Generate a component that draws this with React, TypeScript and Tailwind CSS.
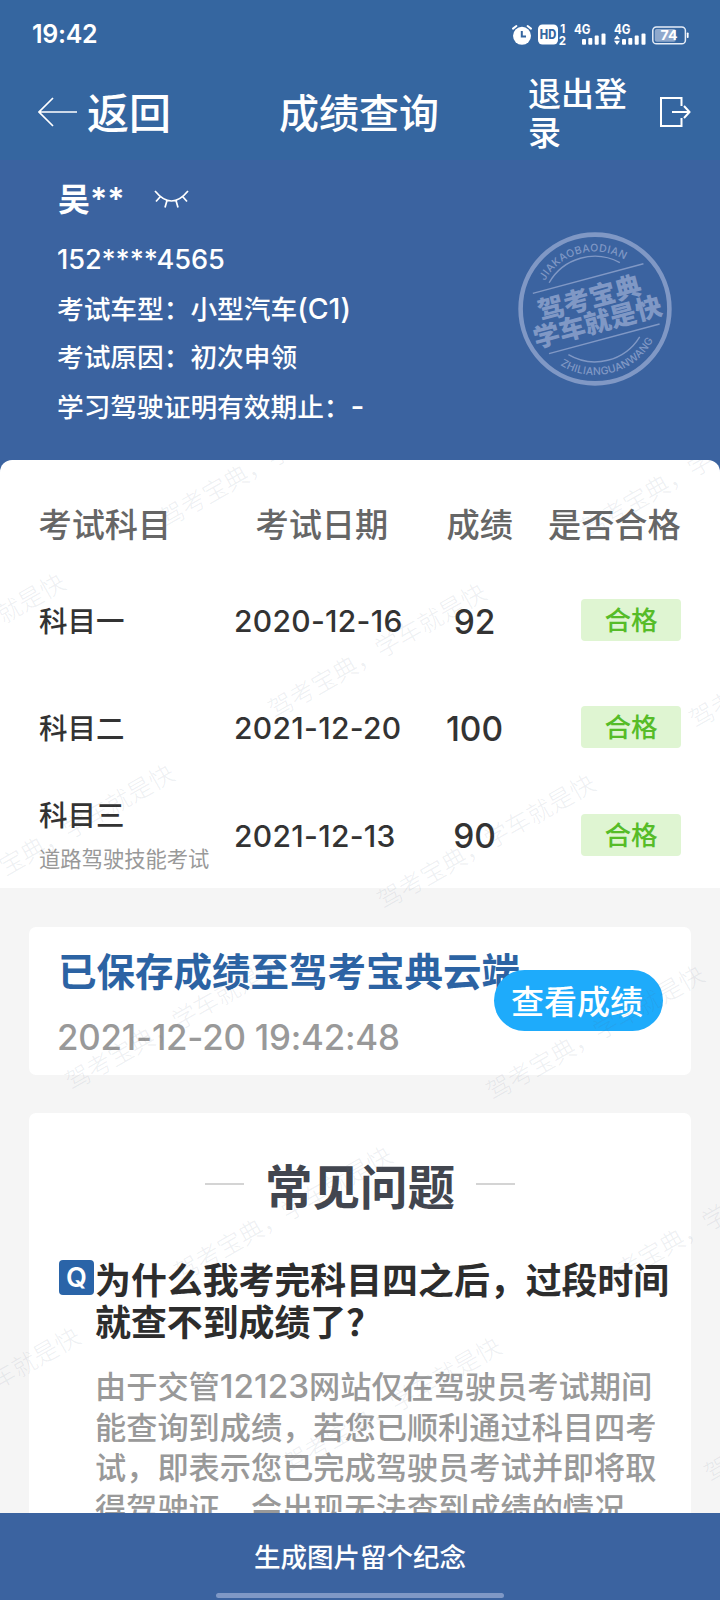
interface ExamRow {
  subject: string
  note?: string
  date: string
  score: number
  status: string
}

const exams: ExamRow[] = [
  { subject: '科目一', date: '2020-12-16', score: 92, status: '合格' },
  { subject: '科目二', date: '2021-12-20', score: 100, status: '合格' },
  { subject: '科目三', note: '道路驾驶技能考试', date: '2021-12-13', score: 90, status: '合格' },
]

const answerLines = [
  '能查询到成绩，若您已顺利通过科目四考',
  '试，即表示您已完成驾驶员考试并即将取',
  '得驾驶证，会出现无法查到成绩的情况，',
]

// Centre of the last glyph of every watermark, on a skewed grid
const watermarks = [-3, -2, -1, 0, 1, 2, 3, 4, 5]
  .flatMap((row) =>
    [-2, -1, 0, 1, 2].map((col) => ({
      x: 52 + row * 109 + col * 421,
      y: 126 + row * 191 + col * 10,
    }))
  )
  .filter(({ x, y }) => x > 0 && x < 910 && y > -110 && y < 1050)

function StatusIcons() {
  return (
    <svg width="178" height="24" viewBox="0 0 178 24" fill="#fff" className="overflow-visible">
      {/* alarm */}
      <circle cx="11" cy="13.8" r="9" />
      <path d="M2 6.600 5.400 4M20 6.600 16.600 4" stroke="#fff" strokeWidth="2" strokeLinecap="round" />
      <path d="M10.800 9v5.600h4.200" stroke="#3566a0" strokeWidth="2" fill="none" />
      {/* HD */}
      <rect x="27" y="2.5" width="20" height="20" rx="4.5" />
      <text x="28.8" y="17" fontSize="12.5" fontWeight="800" fill="#3566a0" textLength="16.4" lengthAdjust="spacingAndGlyphs">HD</text>
      <text x="49.2" y="11" fontSize="11.5" fontWeight="700">1</text>
      <text x="47.8" y="23" fontSize="11.5" fontWeight="700">2</text>
      {/* signal 1 */}
      <text x="63" y="12.4" fontSize="13" fontWeight="700" textLength="16.5" lengthAdjust="spacingAndGlyphs">4G</text>
      <rect x="71" y="17" width="4" height="5.8" rx="1" />
      <rect x="77.3" y="16" width="4" height="6.8" rx="1" />
      <rect x="83.7" y="13.5" width="4" height="9.3" rx="1" />
      <rect x="90.5" y="11.5" width="4" height="11.3" rx="1" />
      {/* signal 2 */}
      <text x="103" y="12.4" fontSize="13" fontWeight="700" textLength="16.5" lengthAdjust="spacingAndGlyphs">4G</text>
      <path d="M103 17.300 106 13.300 109 17.300zM103 18.800 106 23 109 18.800z" />
      <rect x="111" y="17" width="4" height="5.8" rx="1" />
      <rect x="117.3" y="16" width="4" height="6.8" rx="1" />
      <rect x="123.7" y="13.5" width="4" height="9.3" rx="1" />
      <rect x="130.5" y="11.5" width="4" height="11.3" rx="1" />
      {/* battery */}
      <rect x="141.8" y="5" width="32.6" height="16.8" rx="3.6" fill="none" stroke="#e6edf7" strokeWidth="1.5" />
      <rect x="143.8" y="7" width="21" height="12.8" rx="2" fill="#8fa9cd" />
      <rect x="175.8" y="10.5" width="1.8" height="5.5" rx=".8" />
      <text x="149.5" y="18.2" fontSize="13.5" fontWeight="700" textLength="17" lengthAdjust="spacingAndGlyphs">74</text>
    </svg>
  )
}

function Stamp() {
  return (
    <svg width="156" height="156" viewBox="-78 -78 156 156" className="absolute top-[71px] left-[517px]">
      <defs>
        <path id="arc-top" d="M-57.500 0A57.500 57.500 0 0 1 57.500 0" />
        <path id="arc-bottom" d="M-66 0A66 66 0 0 0 66 0" />
      </defs>
      <circle r="74.4" fill="none" stroke="#8098c5" strokeWidth="4.6" />
      <g transform="rotate(-15)" fill="#8098c5">
        <g fill="none" stroke="#8098c5" strokeWidth="1.4">
          <path d="M-37.500-37.200A52.600 52.600 0 0 1 36-38.400M-37.500 37.200A52.600 52.600 0 0 0 36 38.400" />
          <path d="M-56-31.200H58.500M-56 31.200H58.500" />
        </g>
        <text fontSize="10.5" fontWeight="500" textAnchor="middle">
          <textPath href="#arc-top" startOffset="50%" textLength="92">JIAKAOBAODIAN</textPath>
        </text>
        <text fontSize="10.5" fontWeight="500" textAnchor="middle">
          <textPath href="#arc-bottom" startOffset="50%" textLength="108">ZHILIANGUANWANG</textPath>
        </text>
        <text x="-2.5" y="-2.6" fontSize="26" fontWeight="900" textAnchor="middle" textLength="106" lengthAdjust="spacingAndGlyphs">驾考宝典</text>
        <text x="-.8" y="22.6" fontSize="26" fontWeight="900" textAnchor="middle" textLength="132" lengthAdjust="spacingAndGlyphs">学车就是快</text>
      </g>
    </svg>
  )
}

function Header() {
  return (
    <header className="h-[160px] shrink-0 bg-[#3566a0] text-white">
      <div className="flex h-[68px] items-center justify-between pr-[31px] pl-8">
        <span className="pt-0.5 text-[25px] font-semibold tracking-[-0.3px]">19:42</span>
        <StatusIcons />
      </div>
      <div className="flex h-[91px] items-center">
        <div className="ml-[38px] flex w-[241px] items-center">
          <svg width="40" height="30" viewBox="0 0 40 30" fill="none" stroke="#fff" strokeWidth="1.7" className="-mt-1">
            <path d="M39 15H1M15 1 1 15l14 14" />
          </svg>
          <span className="ml-[9px] text-[42px] leading-none font-medium">返回</span>
        </div>
        <h1 className="w-[249px] text-[40px] leading-none font-medium">成绩查询</h1>
        <span className="w-[100px] text-[33px] leading-[38.500px] font-[450]">退出登录</span>
        <svg width="31" height="30" viewBox="0 0 31 30" fill="none" stroke="#fff" strokeWidth="2" className="-mt-1 ml-8">
          <path d="M21.500 9V1H1v28h20.500v-8M12 15h17M24 9l5.500 6-5.500 6" />
        </svg>
      </div>
    </header>
  )
}

function Profile() {
  return (
    <section className="relative h-[312px] shrink-0 bg-[#3b63a0] pt-5 pl-[57px] text-[26.700px] leading-[48.500px] font-[450] text-white">
      <div className="mb-[16px] flex h-[40px] items-center">
        <span className="ml-px text-[32px] font-semibold">吴**</span>
        <svg width="36" height="22" viewBox="0 0 36 22" fill="none" stroke="#fff" strokeWidth="1.7" className="ml-[29px]">
          <path d="M1 2q16.500 20 33 0M6 8l-4 4.500M13 11.500l-2 7M22 11.500l2 7M29 8l4 4.500" />
        </svg>
      </div>
      <div className="text-[27.200px] font-medium tracking-[-0.100px]">152****4565</div>
      <div>
        考试车型：小型汽车<span className="text-[28.500px]">(C1)</span>
      </div>
      <div>考试原因：初次申领</div>
      <div>
        学习驾驶证明有效期止：<span className="text-[30px]">-</span>
      </div>
      <Stamp />
    </section>
  )
}

function ScoreTable() {
  return (
    <section className="relative -mt-3 h-[428px] shrink-0 rounded-t-[12px] bg-white pt-3 text-[#333]">
      <div className="flex h-[107px] items-center text-[33.200px] font-[450] text-[#666]">
        <span className="ml-[38.500px] w-[217px]">考试科目</span>
        <span className="w-[191px]">考试日期</span>
        <span className="w-[101.500px]">成绩</span>
        <span>是否合格</span>
      </div>
      <div className="-mt-[11px]">
        {exams.map((exam) => (
          <div key={exam.subject} className="flex h-[107.300px] items-center">
            <div className="ml-[39px] w-[195px]">
              <div className="text-[28.500px] leading-[42px] font-[450]">{exam.subject}</div>
              {exam.note && <div className="-mb-1 text-[21.300px] leading-[44px] whitespace-nowrap text-[#999]">{exam.note}</div>}
            </div>
            <span className="w-[181px] text-[30px] font-medium tracking-[0.300px]">{exam.date}</span>
            <span className="w-[119px] text-center text-[33.500px] font-medium">{exam.score}</span>
            <span className="mb-[3px] ml-[47px] h-[42px] w-[100px] rounded-[4px] bg-[#dff5d2] text-center text-[26.600px] leading-[42px] font-[450] text-[#56bc28]">
              {exam.status}
            </span>
          </div>
        ))}
      </div>
    </section>
  )
}

function SavedCard() {
  return (
    <section className="relative mx-[29px] mt-[39px] h-[148px] shrink-0 rounded-[7px] bg-white pt-4 pl-[29px]">
      <h2 className="text-[38.500px] leading-[58px] font-bold whitespace-nowrap text-[#2c63a3]">已保存成绩至驾考宝典云端</h2>
      <p className="mt-2 -ml-px text-[34.800px] leading-[56px] font-[450] tracking-[-0.200px] text-[#999]">2021-12-20 19:42:48</p>
      <button className="absolute top-[43px] left-[465px] h-[61px] w-[169px] rounded-full bg-[#1eabfb] pt-1 pr-[3px] text-[33px] font-[450] text-white">
        查看成绩
      </button>
    </section>
  )
}

function Faq() {
  return (
    <section className="mx-[29px] mt-[38px] h-[400px] overflow-hidden rounded-t-[7px] bg-white pt-[42px]">
      <div className="flex h-[64px] items-center justify-center gap-[21px]">
        <i className="mb-1.5 h-0.5 w-[39px] bg-[#d4d4d4]" />
        <h2 className="pt-px text-[47.500px] leading-none font-bold text-[#42464f]">常见问题</h2>
        <i className="mb-1.5 h-0.5 w-[39px] bg-[#d4d4d4]" />
      </div>
      <div className="mt-[41px] flex">
        <span className="ml-[30px] h-[35px] w-[35px] shrink-0 rounded-[4px] bg-[#2a64a8] text-center text-[27px] leading-[36px] font-semibold text-white">
          Q
        </span>
        <h3 className="ml-px w-[580px] text-[35.900px] leading-[42px] font-bold text-[#2d2d2d]">
          为什么我考完科目四之后，过段时间就查不到成绩了？
        </h3>
      </div>
      <div className="mt-[22px] ml-[66px] text-[31.200px] leading-[40.600px] font-[450] whitespace-nowrap text-[#999]">
        <div>
          由于交管<span className="text-[33.200px]">12123</span>网站仅在驾驶员考试期间
        </div>
        {answerLines.map((line) => (
          <div key={line}>{line}</div>
        ))}
      </div>
    </section>
  )
}

function Watermark() {
  return (
    <svg width="720" height="1053" className="pointer-events-none absolute top-[460px] left-0" fill="#5a6a80" fillOpacity=".11">
      {watermarks.map(({ x, y }) => (
        <text
          key={`${x}-${y}`}
          transform={`translate(${x} ${y}) rotate(-29.7)`}
          x="12.5"
          y="9"
          fontSize="24.6"
          fontWeight="300"
          textAnchor="end"
        >
          驾考宝典，学车就是快
        </text>
      ))}
    </svg>
  )
}

export default function App() {
  return (
    <div
      lang="zh-CN"
      className="relative flex h-[1600px] w-[720px] flex-col overflow-hidden bg-[#f5f5f5] font-[family-name:Inter,'Noto_Sans_CJK_SC',sans-serif]"
    >
      <Header />
      <Profile />
      <ScoreTable />
      <SavedCard />
      <Faq />
      <Watermark />
      <footer className="relative flex h-[87px] shrink-0 flex-col items-center bg-[#3b63a0] text-white">
        <span className="mt-[23px] text-[26.500px] leading-[42px] font-[450]">生成图片留个纪念</span>
        <div className="mt-[15px] h-[5px] w-[288px] rounded-full bg-[#7f98c6]" />
      </footer>
    </div>
  )
}
